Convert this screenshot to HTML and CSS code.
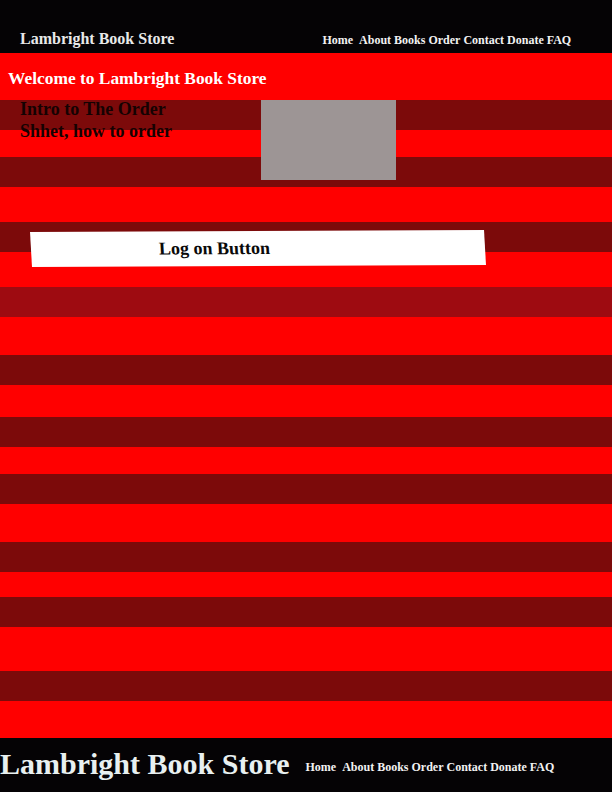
FILE: index.html
```html
<!DOCTYPE html>
<html lang="en">
<head>
<meta charset="utf-8">
<title>Lambright Book Store</title>
<link rel="stylesheet" href="styles.css">
</head>
<body>
<header class="site-header">
  <div class="brand">Lambright Book Store</div>
  <nav class="nav">
    <a class="nav-home" href="#">Home</a>
    <a href="#">About</a>
    <a href="#">Books</a>
    <a href="#">Order</a>
    <a href="#">Contact</a>
    <a href="#">Donate</a>
    <a href="#">FAQ</a>
  </nav>
</header>
<main class="main">
  <h1 class="welcome">Welcome to Lambright Book Store</h1>
  <section class="intro">
    <p class="intro-text">Intro to The Order<br>Shhet, how to order</p>
    <div class="photo"></div>
  </section>
  <button class="logon" type="button">Log on Button</button>
</main>
<footer class="site-footer">
  <div class="footer-brand">Lambright Book Store</div>
  <nav class="nav footer-nav">
    <a class="nav-home" href="#">Home</a>
    <a href="#">About</a>
    <a href="#">Books</a>
    <a href="#">Order</a>
    <a href="#">Contact</a>
    <a href="#">Donate</a>
    <a href="#">FAQ</a>
  </nav>
</footer>
</body>
</html>
```
FILE: styles.css
```css
* { box-sizing: border-box; }

html, body {
  margin: 0;
  padding: 0;
}

body {
  width: 612px;
  height: 792px;
  font-family: "Liberation Serif", "Times New Roman", serif;
  font-weight: bold;
  background: #050305;
  overflow: hidden;
}

.site-header {
  height: 53px;
  background: #050305;
  display: flex;
  align-items: baseline;
  padding: 29px 0 0 20px;
  gap: 148px;
}

.brand {
  color: #e9e9e9;
  font-size: 16px;
  line-height: 20px;
}

.nav {
  display: flex;
  gap: 3px;
  font-size: 12px;
  line-height: 14px;
}

.nav a {
  color: #f2f2f2;
  text-decoration: none;
}

.nav .nav-home {
  margin-right: 3px;
}

.main {
  height: 685px;
  background: linear-gradient(to bottom,
    #ff0000 0, #ff0000 47px,
    #7c0a0a 47px, #7c0a0a 77px,
    #ff0000 77px, #ff0000 104px,
    #7c0a0a 104px, #7c0a0a 134px,
    #ff0000 134px, #ff0000 169px,
    #7c0a0a 169px, #7c0a0a 199px,
    #ff0000 199px, #ff0000 234px,
    #9e0b11 234px, #9e0b11 264px,
    #ff0000 264px, #ff0000 302px,
    #7c0a0a 302px, #7c0a0a 332px,
    #ff0000 332px, #ff0000 364px,
    #7c0a0a 364px, #7c0a0a 394px,
    #ff0000 394px, #ff0000 421px,
    #7c0a0a 421px, #7c0a0a 451px,
    #ff0000 451px, #ff0000 489px,
    #7c0a0a 489px, #7c0a0a 519px,
    #ff0000 519px, #ff0000 544px,
    #7c0a0a 544px, #7c0a0a 574px,
    #ff0000 574px, #ff0000 618px,
    #7c0a0a 618px, #7c0a0a 648px,
    #ff0000 648px, #ff0000 685px);
  display: flex;
  flex-direction: column;
  align-items: flex-start;
}

.welcome {
  margin: 0;
  height: 45px;
  padding: 14px 0 0 8px;
  font-size: 17.4px;
  line-height: 22px;
  color: #ffffff;
  font-weight: bold;
}

.intro {
  display: grid;
  grid-template-columns: 261px 135px;
  width: 100%;
}

.intro-text {
  margin: 0;
  padding-left: 20px;
  font-size: 18px;
  line-height: 22px;
  color: #150202;
}

.photo {
  margin-top: 2px;
  height: 80px;
  background: #9d9595;
}

.logon {
  margin: 51px 0 0 31px;
  width: 454px;
  height: 35px;
  padding: 0 0 0 128px;
  border: 0;
  background: #ffffff;
  color: #0a0a0a;
  font-family: "Liberation Serif", "Times New Roman", serif;
  font-weight: bold;
  font-size: 18px;
  line-height: 35px;
  text-align: left;
  transform: rotate(-0.25deg) skewX(3deg);
}

.site-footer {
  height: 54px;
  background: #050305;
  display: flex;
  align-items: flex-start;
  padding-top: 9px;
  gap: 16px;
}

.footer-brand {
  color: #e8f0f0;
  font-size: 30px;
  line-height: 34px;
}

.footer-nav {
  margin-top: 13px;
}
```
